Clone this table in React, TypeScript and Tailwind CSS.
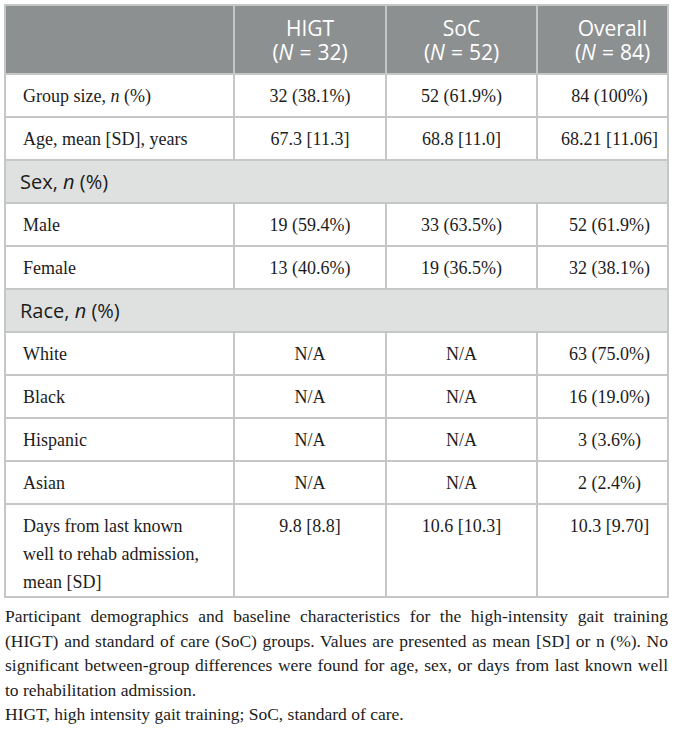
const serif = "font-['Liberation_Serif','Times_New_Roman',serif]";
const sans = "font-['Open_Sans','Lato',sans-serif]";

type Row =
  | { kind: "section"; label: string }
  | { kind: "data"; label: string[]; values: [string, string, string]; tall?: boolean };

const rows: Row[] = [
  { kind: "data", label: ["Group size, n (%)"], values: ["32 (38.1%)", "52 (61.9%)", "84 (100%)"] },
  { kind: "data", label: ["Age, mean [SD], years"], values: ["67.3 [11.3]", "68.8 [11.0]", "68.21 [11.06]"] },
  { kind: "section", label: "Sex" },
  { kind: "data", label: ["Male"], values: ["19 (59.4%)", "33 (63.5%)", "52 (61.9%)"] },
  { kind: "data", label: ["Female"], values: ["13 (40.6%)", "19 (36.5%)", "32 (38.1%)"] },
  { kind: "section", label: "Race" },
  { kind: "data", label: ["White"], values: ["N/A", "N/A", "63 (75.0%)"] },
  { kind: "data", label: ["Black"], values: ["N/A", "N/A", "16 (19.0%)"] },
  { kind: "data", label: ["Hispanic"], values: ["N/A", "N/A", "3 (3.6%)"] },
  { kind: "data", label: ["Asian"], values: ["N/A", "N/A", "2 (2.4%)"] },
  {
    kind: "data",
    label: ["Days from last known", "well to rehab admission,", "mean [SD]"],
    values: ["9.8 [8.8]", "10.6 [10.3]", "10.3 [9.70]"],
    tall: true,
  },
];

function Label({ text }: { text: string }) {
  // italicise the lone "n" in labels like "Group size, n (%)"
  const parts = text.split(/(, n \()/);
  return (
    <>
      {parts.map((p, i) =>
        p === ", n (" ? (
          <span key={i}>
            , <i>n</i> (
          </span>
        ) : (
          <span key={i}>{p}</span>
        )
      )}
    </>
  );
}

const cellBorder = "border-2 border-[#c5c7c7]";

export default function App() {
  return (
    <div className="w-[673px] min-h-[729px] bg-white text-[#1c1c1c]">
      <div className="pl-[4px] pt-[4px]">
        <table className="w-[663px] table-fixed border-collapse">
          <colgroup>
            <col className="w-[229px]" />
            <col className="w-[152px]" />
            <col className="w-[151px]" />
            <col className="w-[131px]" />
          </colgroup>
          <thead>
            <tr className="h-[69px] bg-[#8d9091] text-white">
              <th className={cellBorder}></th>
              {[
                ["HIGT", "32"],
                ["SoC", "52"],
                ["Overall", "84"],
              ].map(([name, n], i) => (
                <th
                  key={name}
                  className={`${cellBorder} ${sans} text-[21px] font-normal leading-[24px] text-center ${
                    i === 2 ? "pl-[20px]" : ""
                  }`}
                >
                  <div>{name}</div>
                  <div>
                    (<i>N</i>
                    <span className="mx-[6px]">=</span>
                    {n})
                  </div>
                </th>
              ))}
            </tr>
          </thead>
          <tbody>
            {rows.map((r, idx) =>
              r.kind === "section" ? (
                <tr key={idx} className="h-[43px] bg-[#dfe1e0]">
                  <td
                    colSpan={4}
                    className={`${cellBorder} ${sans} text-[20px] pl-[14px] leading-[26px]`}
                  >
                    {r.label}, <i>n</i> (%)
                  </td>
                </tr>
              ) : (
                <tr key={idx} className={r.tall ? "h-[91px]" : "h-[43px]"}>
                  <td
                    className={`${cellBorder} ${serif} text-[18px] leading-[28px] pl-[17px] pr-2 ${
                      r.tall ? "align-top pt-[7px]" : "align-middle"
                    }`}
                  >
                    {r.label.map((line, k) => (
                      <div key={k}>
                        <Label text={line} />
                      </div>
                    ))}
                  </td>
                  {r.values.map((v, j) => (
                    <td
                      key={j}
                      className={`${cellBorder} ${serif} text-[18px] leading-[28px] text-center ${
                        j === 2 ? "pl-[14px]" : ""
                      } ${r.tall ? "align-top pt-[7px]" : "align-middle"}`}
                    >
                      {v}
                    </td>
                  ))}
                </tr>
              )
            )}
          </tbody>
        </table>
      </div>
      <div className={`${serif} text-[17.5px] leading-[24.5px] px-[5px] pt-[6px] text-justify w-[673px]`}>
        <p>
          Participant demographics and baseline characteristics for the high-intensity gait training
          (HIGT) and standard of care (SoC) groups. Values are presented as mean [SD] or n (%). No
          significant between-group differences were found for age, sex, or days from last known well
          to rehabilitation admission.
        </p>
        <p>HIGT, high intensity gait training; SoC, standard of care.</p>
      </div>
    </div>
  );
}
